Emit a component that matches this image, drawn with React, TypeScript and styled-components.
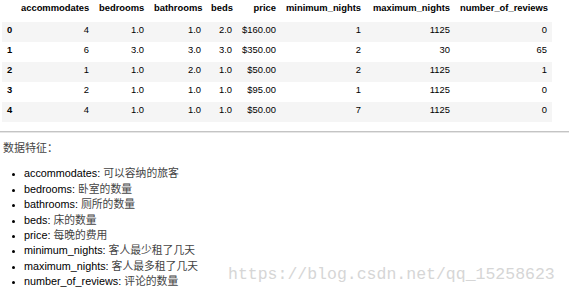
import * as React from 'react';
import styled, { createGlobalStyle } from 'styled-components';

const GlobalStyle = createGlobalStyle`
  html, body {
    margin: 0;
    padding: 0;
    background: #fff;
  }
  body {
    font-family: "Liberation Sans", Arial, sans-serif;
    color: #000;
  }
`;

const Page = styled.div`
  position: relative;
  width: 569px;
  height: 296px;
  overflow: hidden;
`;

const Frame = styled.table`
  margin-left: 2px;
  border-collapse: collapse;
  border-spacing: 0;
  table-layout: fixed;
  width: 550px;
  font-size: 9.4px;
  th, td {
    padding: 0 5px 4px;
    line-height: 16px;
    text-align: right;
    white-space: nowrap;
    overflow: visible;
  }
  thead tr {
    height: 21px;
  }
  thead th {
    padding-bottom: 6px;
  }
  tbody tr {
    height: 20px;
  }
  tbody tr:nth-child(odd) {
    background: #f5f5f5;
  }
  tbody th {
    text-align: left;
  }
`;

const Rule = styled.div`
  margin-top: 9px;
  height: 1px;
  background: #c4c4c4;
  box-shadow: 0 1px 0 #e6e6e6;
`;

const Lead = styled.p`
  margin: 8px 0 0 3px;
  height: 15.4px;
  font-family: "Noto Sans CJK SC", sans-serif;
  font-size: 11px;
  line-height: 15.4px;
  color: #444;
`;

const Features = styled.ul`
  margin: 11px 0 0;
  padding-left: 24px;
  font-size: 10.8px;
  line-height: 15.4px;
  li {
    list-style: disc;
    height: 15.4px;
  }
  li::marker {
    font-size: 9px;
  }
`;

const Zh = styled.span`
  font-family: "Noto Sans CJK SC", sans-serif;
  line-height: 10px;
  color: #444;
`;

const Watermark = styled.div`
  position: absolute;
  left: 228px;
  top: 265px;
  font-family: "Liberation Mono", monospace;
  font-size: 16.5px;
  line-height: 20px;
  color: #d6d6d6;
  white-space: nowrap;
  pointer-events: none;
`;

const columns = [
  { key: 'accommodates', width: 78 },
  { key: 'bedrooms', width: 55 },
  { key: 'bathrooms', width: 57 },
  { key: 'beds', width: 31 },
  { key: 'price', width: 44 },
  { key: 'minimum_nights', width: 85 },
  { key: 'maximum_nights', width: 89 },
  { key: 'number_of_reviews', width: 97 },
];

const rows = [
  ['4', '1.0', '1.0', '2.0', '$160.00', '1', '1125', '0'],
  ['6', '3.0', '3.0', '3.0', '$350.00', '2', '30', '65'],
  ['1', '1.0', '2.0', '1.0', '$50.00', '2', '1125', '1'],
  ['2', '1.0', '1.0', '1.0', '$95.00', '1', '1125', '0'],
  ['4', '1.0', '1.0', '1.0', '$50.00', '7', '1125', '0'],
];

const features = [
  ['accommodates', '可以容纳的旅客'],
  ['bedrooms', '卧室的数量'],
  ['bathrooms', '厕所的数量'],
  ['beds', '床的数量'],
  ['price', '每晚的费用'],
  ['minimum_nights', '客人最少租了几天'],
  ['maximum_nights', '客人最多租了几天'],
  ['number_of_reviews', '评论的数量'],
];

const App = () => (
  <Page>
    <GlobalStyle />
    <Frame>
      <colgroup>
        <col style={{ width: 14 }} />
        {columns.map((c) => (
          <col key={c.key} style={{ width: c.width }} />
        ))}
      </colgroup>
      <thead>
        <tr>
          <th />
          {columns.map((c) => (
            <th key={c.key}>{c.key}</th>
          ))}
        </tr>
      </thead>
      <tbody>
        {rows.map((r, i) => (
          <tr key={i}>
            <th>{i}</th>
            {r.map((v, j) => (
              <td key={j}>{v}</td>
            ))}
          </tr>
        ))}
      </tbody>
    </Frame>
    <Rule />
    <Lead>数据特征：</Lead>
    <Features>
      {features.map(([name, desc]) => (
        <li key={name}>
          {name}: <Zh>{desc}</Zh>
        </li>
      ))}
    </Features>
    <Watermark>https://blog.csdn.net/qq_15258623</Watermark>
  </Page>
);

export default App;
